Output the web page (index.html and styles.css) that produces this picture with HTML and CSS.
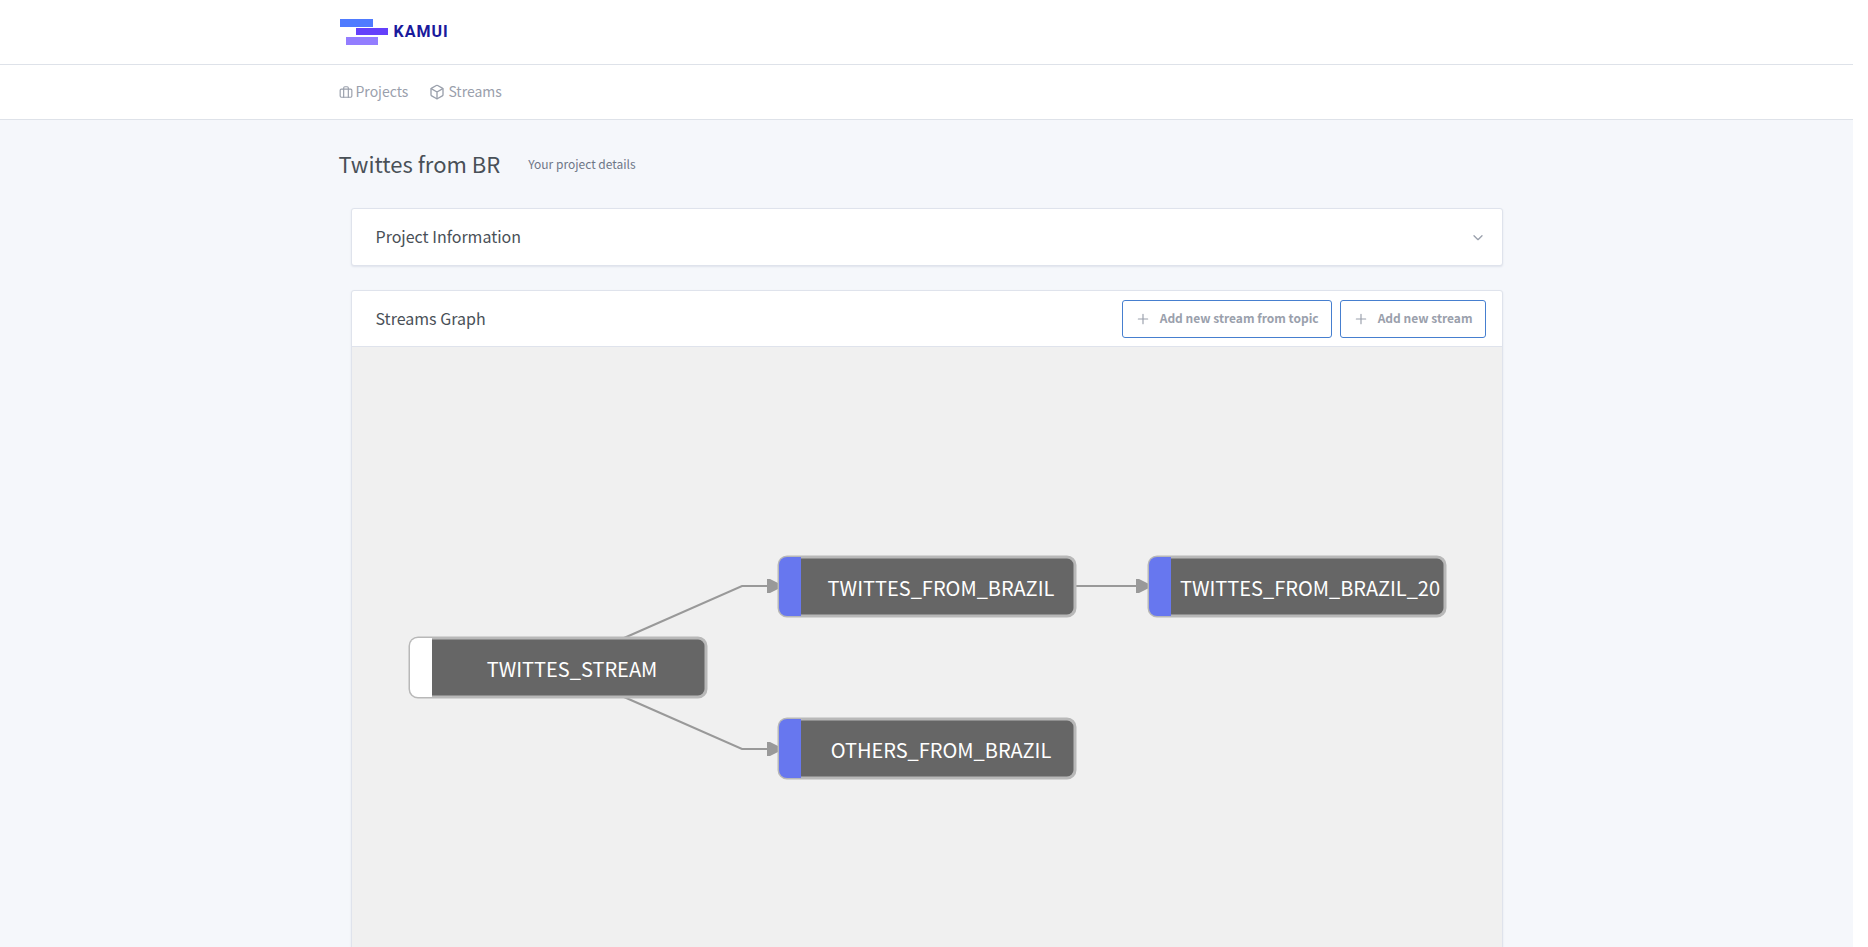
FILE: index.html
```html
<!DOCTYPE html>
<html lang="en">
<head>
<meta charset="utf-8">
<meta name="viewport" content="width=device-width, initial-scale=1">
<title>Kamui - Twittes from BR</title>
<link rel="stylesheet" href="styles.css">
</head>
<body>
<div class="page">
  <header class="header">
    <div class="container header-inner">
      <a class="brand" href="#" aria-label="Kamui home">
        <svg class="brand-mark" width="49" height="28" viewBox="0 0 49 28" aria-hidden="true">
          <rect x="0" y="1" width="33" height="8" fill="#4f7bff"/>
          <rect x="16" y="10" width="32" height="7" fill="#6440fb"/>
          <rect x="6" y="19" width="32" height="8" fill="#937dff"/>
        </svg>
        <span class="brand-name">KAMUI</span>
      </a>
    </div>
  </header>
  <nav class="nav">
    <div class="container nav-inner">
      <a class="nav-link" href="#">
        <svg class="icon" width="14" height="14" viewBox="0 0 24 24" aria-hidden="true"><rect x="2" y="7" width="20" height="14" rx="2"/><path d="M16 21V5a2 2 0 0 0-2-2h-4a2 2 0 0 0-2 2v16"/></svg>
        <span>Projects</span>
      </a>
      <a class="nav-link" href="#">
        <svg class="icon" width="16" height="16" viewBox="0 0 24 24" aria-hidden="true"><path d="M21 16V8a2 2 0 0 0-1-1.730l-7-4a2 2 0 0 0-2 0l-7 4A2 2 0 0 0 3 8v8a2 2 0 0 0 1 1.730l7 4a2 2 0 0 0 2 0l7-4A2 2 0 0 0 21 16z"/><path d="M3.270 6.960L12 12.010l8.730-5.050M12 22.080V12"/></svg>
        <span>Streams</span>
      </a>
    </div>
  </nav>
  <main class="container main">
    <div class="page-header">
      <h1 class="page-title">Twittes from BR</h1>
      <p class="page-subtitle">Your project details</p>
    </div>
    <div class="cards">
      <section class="card">
        <div class="card-header">
          <h2 class="card-title">Project Information</h2>
          <button class="collapse" type="button" aria-label="Expand project information">
            <svg class="icon" width="16" height="16" viewBox="0 0 24 24" aria-hidden="true"><path d="M6 10l6 6 6-6"/></svg>
          </button>
        </div>
      </section>
      <section class="card">
        <div class="card-header card-header-line">
          <h2 class="card-title">Streams Graph</h2>
          <div class="actions">
            <button class="btn" type="button">
              <svg class="icon" width="14" height="14" viewBox="0 0 24 24" aria-hidden="true"><path d="M12 4v16M4 12h16"/></svg>
              <span>Add new stream from topic</span>
            </button>
            <button class="btn" type="button">
              <svg class="icon" width="14" height="14" viewBox="0 0 24 24" aria-hidden="true"><path d="M12 4v16M4 12h16"/></svg>
              <span>Add new stream</span>
            </button>
          </div>
        </div>
        <div class="graph">
          <svg class="graph-canvas" viewBox="0 0 1150 700" role="img" aria-label="Streams graph">
            <defs>
              <marker id="arrow" markerUnits="userSpaceOnUse" markerWidth="14" markerHeight="14" refX="13" refY="7" orient="auto"><path class="arrow" d="M0 0h3l10 5v4l-10 5h-3z"/></marker>
              <clipPath id="node-shape"><rect width="296" height="59" rx="8"/></clipPath>
              <g id="node-box">
                <rect class="node-body" width="296" height="59" rx="8"/>
                <rect class="node-border" width="296" height="59" rx="8"/>
                <rect class="node-tag" width="22" height="59" clip-path="url(#node-shape)"/>
              </g>
            </defs>
            <path class="edge" d="M272 291L390 239H428" marker-end="url(#arrow)"/>
            <path class="edge" d="M272 350L390 402H428" marker-end="url(#arrow)"/>
            <path class="edge" d="M723 239H797" marker-end="url(#arrow)"/>
            <g class="node node-source" transform="translate(58 291)"><use href="#node-box"/><text x="162" y="39">TWITTES_STREAM</text></g>
            <g class="node" transform="translate(427 210)"><use href="#node-box"/><text x="162" y="39">TWITTES_FROM_BRAZIL</text></g>
            <g class="node" transform="translate(797 210)"><use href="#node-box"/><text x="161" y="39">TWITTES_FROM_BRAZIL_20</text></g>
            <g class="node" transform="translate(427 372)"><use href="#node-box"/><text x="162" y="39">OTHERS_FROM_BRAZIL</text></g>
          </svg>
        </div>
      </section>
    </div>
  </main>
</div>
</body>
</html>
```
FILE: styles.css
```css
* { box-sizing: border-box; }

body {
  margin: 0;
  height: 100vh;
  overflow: hidden;
  background: #fff;
  color: #495057;
  font-family: "Noto Sans CJK SC", "Noto Sans", sans-serif;
  font-size: 14px;
  line-height: 24px;
}

.page {
  margin-right: 15px;
  min-height: 100vh;
  background: #f5f7fb;
}

.container {
  width: 100%;
  max-width: 1200px;
  margin: 0 auto;
  padding: 0 12px;
}

.icon {
  flex: none;
  fill: none;
  stroke: currentColor;
  stroke-width: 2;
  stroke-linecap: round;
  stroke-linejoin: round;
}

.header {
  background: #fff;
  border-bottom: 1px solid #dee2e9;
}

.header-inner {
  display: flex;
  align-items: center;
  height: 64px;
}

.brand {
  display: flex;
  align-items: center;
  gap: 5px;
  padding-left: 1px;
  color: #1a1a9c;
  text-decoration: none;
}

.brand-name {
  font-family: "Roboto", sans-serif;
  font-size: 16px;
  font-weight: 700;
  letter-spacing: 1px;
}

.nav {
  background: #fff;
  border-bottom: 1px solid #dee2e9;
}

.nav-inner {
  display: flex;
  gap: 21px;
  height: 54px;
}

.nav-link {
  display: flex;
  align-items: center;
  gap: 3px;
  color: #9aa0ac;
  text-decoration: none;
}

.nav-link span { padding-bottom: 2px; }

.page-header {
  display: flex;
  align-items: center;
  gap: 28px;
  padding: 24px 0;
}

.page-title {
  margin: 0;
  padding-bottom: 2px;
  font-size: 22px;
  font-weight: 400;
  line-height: 38px;
}

.page-subtitle {
  margin: 0;
  color: #6e7687;
  font-size: 12px;
}

.cards {
  display: flex;
  flex-direction: column;
  gap: 24px;
  padding: 0 12px;
}

.card {
  overflow: hidden;
  background: #fff;
  border: 1px solid #dfe3ec;
  border-radius: 3px;
  box-shadow: 0 1px 2px #dfe3ec;
}

.card-header {
  display: flex;
  align-items: center;
  justify-content: space-between;
  min-height: 56px;
  padding: 0 16px 0 24px;
}

.card-header-line { border-bottom: 1px solid #dfe3ec; }

.card-title {
  margin: 0;
  padding-bottom: 2px;
  font-size: 16px;
  font-weight: 400;
}

.collapse {
  display: flex;
  padding: 0;
  border: 0;
  background: none;
  color: #9aa0ac;
}

.actions {
  display: flex;
  gap: 8px;
}

.btn {
  display: flex;
  align-items: center;
  gap: 10px;
  height: 38px;
  padding: 0 12px 0 13px;
  border: 1px solid #467fcf;
  border-radius: 3px;
  background: #fff;
  color: #9aa0ac;
  font: inherit;
  font-size: 12px;
  font-weight: 700;
}

.btn span { padding-bottom: 2px; }

.graph { background: #f0f0f0; }

.graph-canvas {
  display: block;
  width: 100%;
}

.edge {
  fill: none;
  stroke: #999;
  stroke-width: 2;
}

.arrow { fill: #999; }
.node-body { fill: #666; }
.node-tag { fill: var(--tag); }

.node-border {
  fill: none;
  stroke: #b8b8b8;
  stroke-width: 3;
}

.node { --tag: #6777ef; }
.node-source { --tag: #fff; }

.node text {
  fill: #fff;
  font-size: 20px;
  text-anchor: middle;
}
```
